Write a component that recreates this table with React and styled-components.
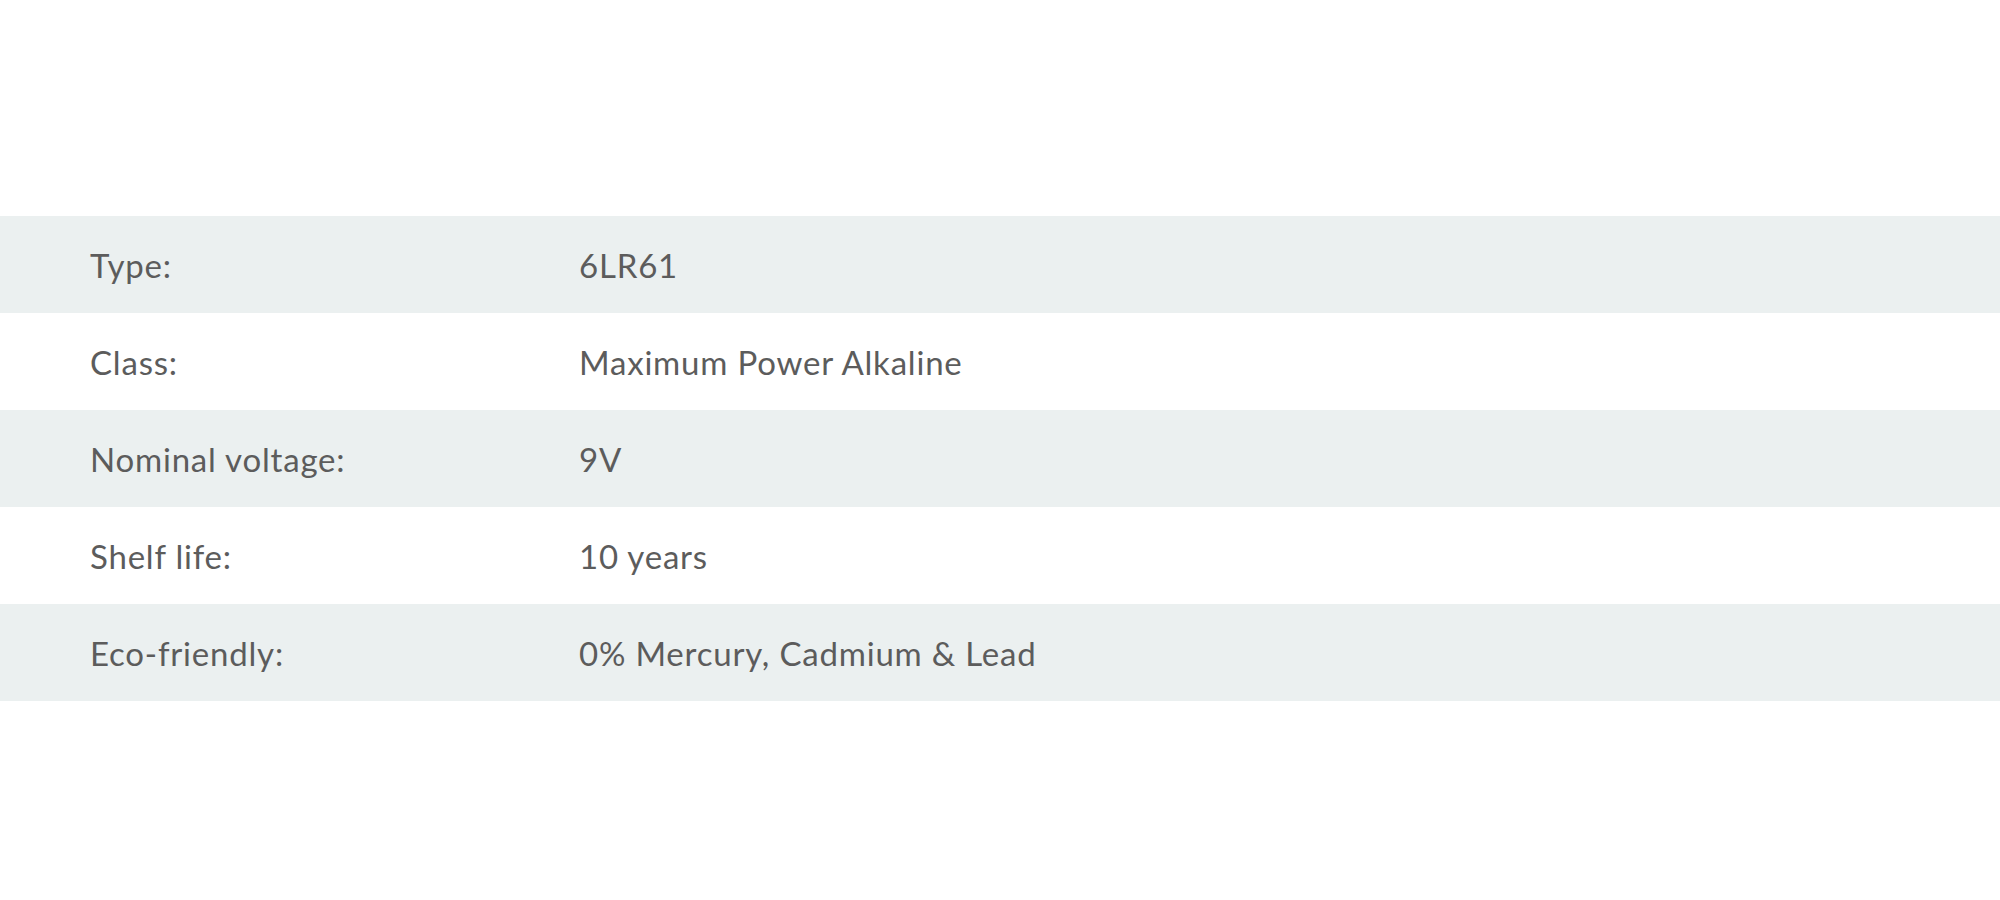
import React from 'react';
import styled, { createGlobalStyle } from 'styled-components';

const GlobalStyle = createGlobalStyle`
  body {
    margin: 0;
    background: #ffffff;
    font-family: Lato, "Open Sans", sans-serif;
  }
`;

const Page = styled.div`
  padding-top: 216px;
  height: 900px;
  box-sizing: border-box;
`;

const Table = styled.div`
  display: flex;
  flex-direction: column;
`;

const Row = styled.div`
  display: grid;
  grid-template-columns: 489px 1fr;
  align-items: center;
  height: 97px;
  padding-left: 90px;
  background: ${({ $shaded }) => ($shaded ? '#ebf0f0' : '#ffffff')};
`;

const Label = styled.span`
  font-size: 33px;
  letter-spacing: 0.8px;
  color: #5c5c5c;
`;

const Value = styled.span`
  font-size: 33px;
  letter-spacing: 0.8px;
  color: #5c5c5c;
`;

const specs = [
  ['Type:', '6LR61'],
  ['Class:', 'Maximum Power Alkaline'],
  ['Nominal voltage:', '9V'],
  ['Shelf life:', '10 years'],
  ['Eco-friendly:', '0% Mercury, Cadmium & Lead'],
];

const App = () => {
  return (
    <Page>
      <GlobalStyle />
      <Table>
        {specs.map(([label, value], i) => (
          <Row key={label} $shaded={i % 2 === 0}>
            <Label>{label}</Label>
            <Value>{value}</Value>
          </Row>
        ))}
      </Table>
    </Page>
  );
};

export default App;
